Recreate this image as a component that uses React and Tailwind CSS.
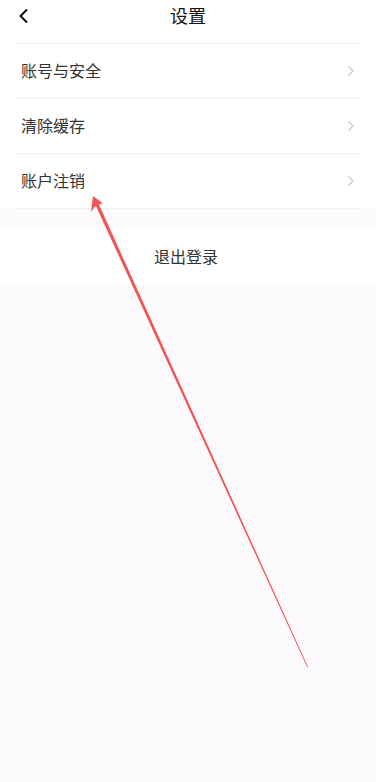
import React from "react";

function Row({ label }) {
  return (
    <div className="mx-[14px] h-[55px] flex items-center justify-between border-b border-[#f0f0f0]">
      <span className="text-[16px] text-[#333] pl-[7px] -mt-[2px]">{label}</span>
      <svg width="8" height="12" viewBox="0 0 8 12" className="mr-[7px]">
        <path d="M1.5 1.5 L6 6 L1.5 10.5" fill="none" stroke="#c8c8c8" strokeWidth="1.3" />
      </svg>
    </div>
  );
}

export default function App() {
  return (
    <div
      className="relative w-[376px] h-[782px] bg-[#fdfafd] overflow-hidden"
      style={{ fontFamily: '"Noto Sans CJK SC", "Noto Sans", sans-serif' }}
    >
      <div className="bg-white">
        <div className="h-[44px] flex items-center justify-center relative border-b border-[#f2f2f2] mx-[14px]">
          <svg width="12" height="16" viewBox="0 0 12 16" className="absolute left-[4px] top-[8px]">
            <path d="M9 1.5 L2.5 8 L9 14.5" fill="none" stroke="#111" strokeWidth="2" />
          </svg>
          <span className="text-[18px] text-[#111] -mt-[12px]">设置</span>
        </div>
        <Row label="账号与安全" />
        <Row label="清除缓存" />
        <Row label="账户注销" />
      </div>
      <div className="h-[20px]" />
      <div className="bg-white h-[56px] flex items-center justify-center">
        <span className="text-[16px] text-[#333] -ml-[4px] -mt-[2px]">退出登录</span>
      </div>
      <svg className="absolute left-0 top-0" width="376" height="782" viewBox="0 0 376 782">
        <polygon points="308,667 307.2,667.3 95.5,205 98.5,203.6" fill="#f25454" />
        <polygon points="93,196 91,212 94.5,207 100,204 103,203.5" fill="#f25454" />
      </svg>
    </div>
  );
}
